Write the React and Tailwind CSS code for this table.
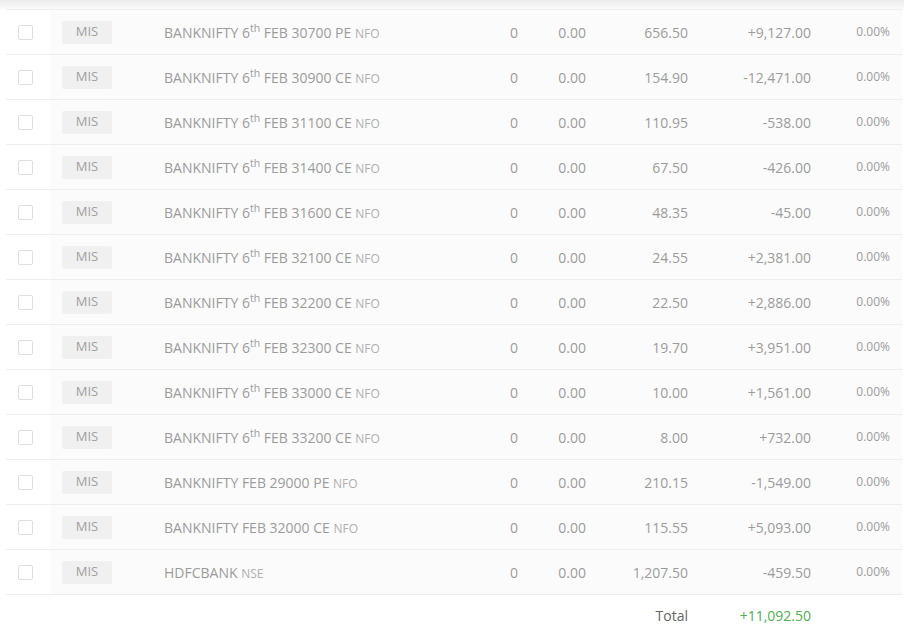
const rows = [
  { sym: 'BANKNIFTY', weekly: true, rest: 'FEB 30700 PE', ex: 'NFO', ltp: '656.50', pnl: '+9,127.00' },
  { sym: 'BANKNIFTY', weekly: true, rest: 'FEB 30900 CE', ex: 'NFO', ltp: '154.90', pnl: '-12,471.00' },
  { sym: 'BANKNIFTY', weekly: true, rest: 'FEB 31100 CE', ex: 'NFO', ltp: '110.95', pnl: '-538.00' },
  { sym: 'BANKNIFTY', weekly: true, rest: 'FEB 31400 CE', ex: 'NFO', ltp: '67.50', pnl: '-426.00' },
  { sym: 'BANKNIFTY', weekly: true, rest: 'FEB 31600 CE', ex: 'NFO', ltp: '48.35', pnl: '-45.00' },
  { sym: 'BANKNIFTY', weekly: true, rest: 'FEB 32100 CE', ex: 'NFO', ltp: '24.55', pnl: '+2,381.00' },
  { sym: 'BANKNIFTY', weekly: true, rest: 'FEB 32200 CE', ex: 'NFO', ltp: '22.50', pnl: '+2,886.00' },
  { sym: 'BANKNIFTY', weekly: true, rest: 'FEB 32300 CE', ex: 'NFO', ltp: '19.70', pnl: '+3,951.00' },
  { sym: 'BANKNIFTY', weekly: true, rest: 'FEB 33000 CE', ex: 'NFO', ltp: '10.00', pnl: '+1,561.00' },
  { sym: 'BANKNIFTY', weekly: true, rest: 'FEB 33200 CE', ex: 'NFO', ltp: '8.00', pnl: '+732.00' },
  { sym: 'BANKNIFTY', weekly: false, rest: 'FEB 29000 PE', ex: 'NFO', ltp: '210.15', pnl: '-1,549.00' },
  { sym: 'BANKNIFTY', weekly: false, rest: 'FEB 32000 CE', ex: 'NFO', ltp: '115.55', pnl: '+5,093.00' },
  { sym: 'HDFCBANK', weekly: false, rest: '', ex: 'NSE', ltp: '1,207.50', pnl: '-459.50' },
]

export default function App() {
  return (
    <div
      className="w-[904px] h-[636px] bg-white overflow-hidden text-[14px] text-[#9b9b9b]"
      style={{ fontFamily: '"Open Sans", "Noto Sans", sans-serif' }}
    >
      {/* top shadow */}
      <div className="h-[9px] bg-gradient-to-b from-[#ececec] to-[#fafafa]" />

      <div className="ml-[6px] mr-[2px]">
        {rows.map((r, i) => (
          <div key={i} className="flex items-center h-[45px] border-t border-[#eeeeee]">
            {/* checkbox */}
            <div className="w-[44px] h-full flex items-center bg-white">
              <div className="ml-[12px] w-[15px] h-[15px] rounded-[2px] border border-[#dedede] bg-white" />
            </div>

            <div className="flex-1 h-full flex items-center bg-[#fbfbfb]">
              {/* product */}
              <div className="w-[114px] flex items-center">
                <span className="ml-[12px] w-[50px] h-[23px] flex items-center justify-center rounded-[2px] bg-[#f0f0f0] text-[13px] text-[#a0a0a0]">
                  MIS
                </span>
              </div>

              {/* instrument */}
              <div className="flex-1 whitespace-nowrap">
                {r.sym}{' '}
                {r.weekly && (
                  <>
                    6<sup>th</sup>{' '}
                  </>
                )}
                {r.rest}
                {r.rest && ' '}
                <span className="text-[12px] text-[#b0b0b0]">{r.ex}</span>
              </div>

              <div className="w-[60px] text-right">0</div>
              <div className="w-[68px] text-right">0.00</div>
              <div className="w-[102px] text-right">{r.ltp}</div>
              <div className="w-[123px] text-right">{r.pnl}</div>
              <div className="w-[79px] text-right text-[12px]">0.00%</div>
              <div className="w-[12px]" />
            </div>
          </div>
        ))}

        {/* total */}
        <div className="flex items-center h-[42px] border-t border-[#eeeeee]">
          <div className="flex-1" />
          <div className="w-[102px] text-right text-[#666666]">Total</div>
          <div className="w-[123px] text-right text-[#4caf50]">+11,092.50</div>
          <div className="w-[91px]" />
        </div>
      </div>
    </div>
  )
}
